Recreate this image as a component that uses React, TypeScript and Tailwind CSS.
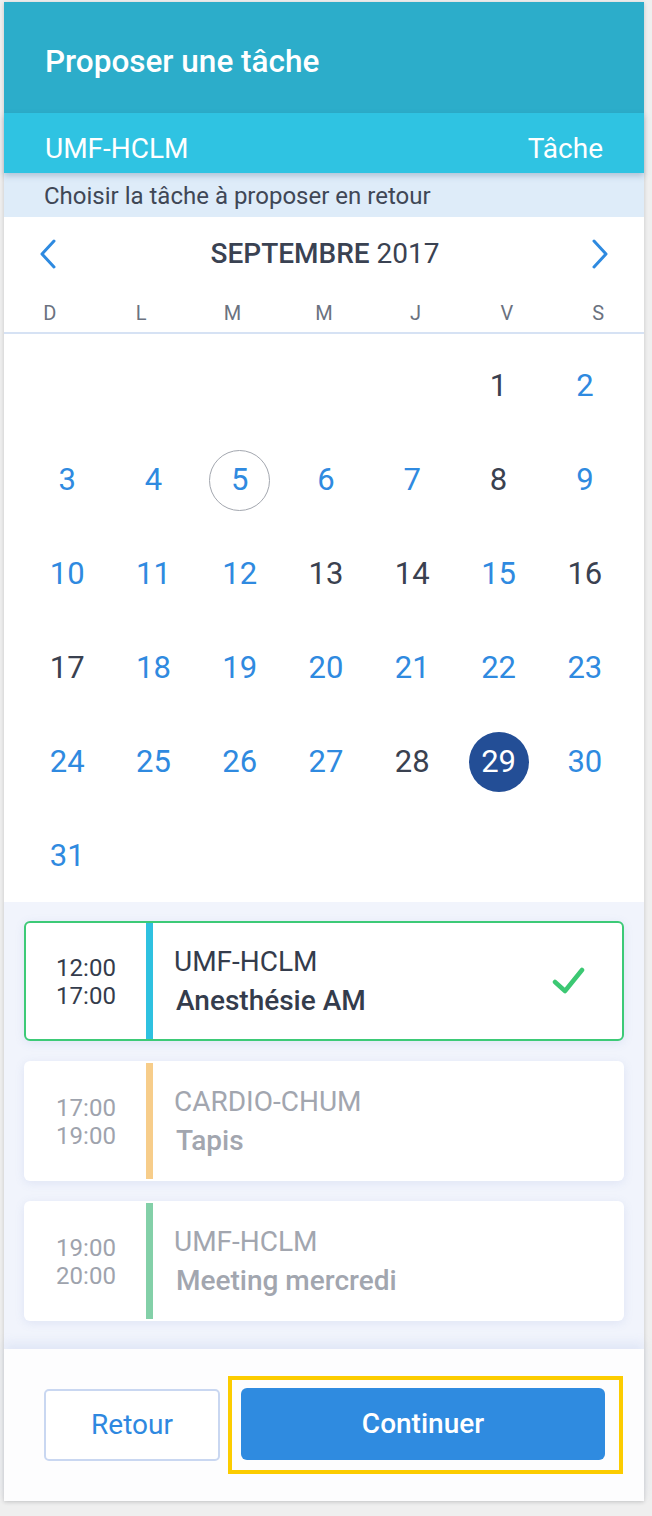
import React from 'react';

type Day = { n: number; tone: 'blue' | 'dark' | 'today' | 'selected' };

const darkDays = [1, 8, 13, 14, 16, 17, 28];

const buildDays = (): (Day | null)[] => {
  const cells: (Day | null)[] = [null, null, null, null, null];
  for (let n = 1; n <= 31; n++) {
    let tone: Day['tone'] = darkDays.includes(n) ? 'dark' : 'blue';
    if (n === 5) tone = 'today';
    if (n === 29) tone = 'selected';
    cells.push({ n, tone });
  }
  return cells;
};

const events = [
  { start: '12:00', end: '17:00', site: 'UMF-HCLM', title: 'Anesthésie AM', stripe: 'bg-[#2ec1e0]', active: true },
  { start: '17:00', end: '19:00', site: 'CARDIO-CHUM', title: 'Tapis', stripe: 'bg-[#f7cd8a]', active: false },
  { start: '19:00', end: '20:00', site: 'UMF-HCLM', title: 'Meeting mercredi', stripe: 'bg-[#83d0a8]', active: false },
];

const Chevron: React.FC<{ dir: 'left' | 'right' }> = ({ dir }) => (
  <svg width="18" height="30" viewBox="0 0 18 30" fill="none">
    <path
      d={dir === 'left' ? 'M15 2 L3 15 L15 28' : 'M3 2 L15 15 L3 28'}
      stroke="#2e8ae0"
      strokeWidth="3"
      strokeLinecap="round"
      strokeLinejoin="round"
    />
  </svg>
);

const App: React.FC = () => {
  const days = buildDays();

  return (
    <div className="min-h-screen bg-[#efefef] pt-[2px] pl-[4px] font-['Roboto',sans-serif]">
      <div className="w-[640px] bg-white shadow-[0_1px_4px_rgba(0,0,0,0.18)] flex flex-col">
        {/* header */}
        <div className="h-[111px] bg-[#2cadca] flex items-center pl-[41px] pt-[9px]">
          <h1 className="text-white text-[31.5px] font-medium">Proposer une tâche</h1>
        </div>
        <div className="relative z-10 h-[60px] bg-[#2fc3e2] flex items-center justify-between pl-[41px] pr-[41px] pt-[11px] shadow-[0_3px_6px_rgba(40,70,110,0.25)]">
          <span className="text-white text-[28px]">UMF-HCLM</span>
          <span className="text-white text-[28px]">Tâche</span>
        </div>
        <div className="h-[44px] bg-[#deecf9] flex items-center pl-[40px] pt-[1px]">
          <span className="text-[#3f4756] text-[24px]">Choisir la tâche à proposer en retour</span>
        </div>

        {/* calendar */}
        <div className="h-[73px] flex items-center justify-between px-[35px]">
          <Chevron dir="left" />
          <div className="text-[28px] text-[#3a4252] pl-[2px] pt-[1px]">
            <span className="font-medium">SEPTEMBRE</span> 2017
          </div>
          <Chevron dir="right" />
        </div>
        <div className="grid grid-cols-7 h-[44px] items-center border-b-2 border-[#d6e2f4]">
          {['D', 'L', 'M', 'M', 'J', 'V', 'S'].map((d, i) => (
            <span key={i} className="text-center text-[20px] text-[#6b7280] pt-[3px]">
              {d}
            </span>
          ))}
        </div>
        <div className="grid grid-cols-7 ml-[20px] mr-[16px] pt-[4px]">
          {days.map((d, i) => (
            <div key={i} className="h-[94px] flex items-center justify-center pt-[2px]">
              {d && (
                <span
                  className={
                    d.tone === 'selected'
                      ? 'w-[60px] h-[60px] rounded-full bg-[#234e96] text-white flex items-center justify-center text-[31px]'
                      : d.tone === 'today'
                      ? 'w-[61px] h-[61px] rounded-full border-[1.5px] border-[#a3a7af] text-[#2f8ae0] flex items-center justify-center text-[31px]'
                      : d.tone === 'dark'
                      ? 'text-[31px] text-[#3a4150]'
                      : 'text-[31px] text-[#2f8ae0]'
                  }
                >
                  {d.n}
                </span>
              )}
            </div>
          ))}
        </div>

        {/* tasks */}
        <div className="bg-[#f1f4fc] px-[20px] pt-[19px] pb-[28px] flex flex-col gap-[20px] w-full">
          {events.map((e, i) => (
            <div
              key={i}
              className={`w-[600px] h-[120px] bg-white rounded-[6px] flex overflow-hidden shadow-[0_2px_10px_rgba(120,140,200,0.15)] border-2 ${
                e.active ? 'border-[#3dca77]' : 'border-transparent'
              }`}
            >
              <div
                className={`w-[120px] flex flex-col items-center justify-center text-[24px] leading-[28px] pt-[2px] ${
                  e.active ? 'text-[#343c4c]' : 'text-[#9ea3ad]'
                }`}
              >
                <span>{e.start}</span>
                <span>{e.end}</span>
              </div>
              <div className={`w-[7px] ${e.stripe} ${e.active ? '' : '-my-[2px]'}`} />
              <div className="flex-1 flex items-center justify-between pl-[21px] pr-[36px]">
                <div className="flex flex-col">
                  <span className={`text-[28px] leading-[39px] ${e.active ? 'text-[#343c4c]' : 'text-[#a2a6af]'}`}>
                    {e.site}
                  </span>
                  <span
                    className={`text-[28px] leading-[39px] font-medium pl-[2px] ${
                      e.active ? 'text-[#343c4c]' : 'text-[#a2a6af]'
                    }`}
                  >
                    {e.title}
                  </span>
                </div>
                {e.active && (
                  <svg width="34" height="30" viewBox="0 0 34 30" fill="none">
                    <path
                      d="M3 16 L13 25 L30 4"
                      stroke="#3cc873"
                      strokeWidth="4.5"
                      strokeLinecap="round"
                      strokeLinejoin="round"
                    />
                  </svg>
                )}
              </div>
            </div>
          ))}
        </div>

        {/* footer */}
        <div className="relative h-[152px] bg-[#fdfdfe] flex items-center pl-[40px] shadow-[0_-6px_10px_rgba(150,170,220,0.18)]">
          <button className="w-[176px] h-[72px] rounded-[5px] border-2 border-[#c9d7f1] text-[#2e88e0] text-[28px] bg-white">
            Retour
          </button>
          <div className="ml-[8px] border-4 border-[#fccc00] pl-[9px] pr-[14px] pt-[8px] pb-[10px]">
            <button className="w-[364px] h-[72px] rounded-[6px] bg-[#2f8be0] text-white text-[28px] font-medium">
              Continuer
            </button>
          </div>
        </div>
      </div>
    </div>
  );
};

export default App;
